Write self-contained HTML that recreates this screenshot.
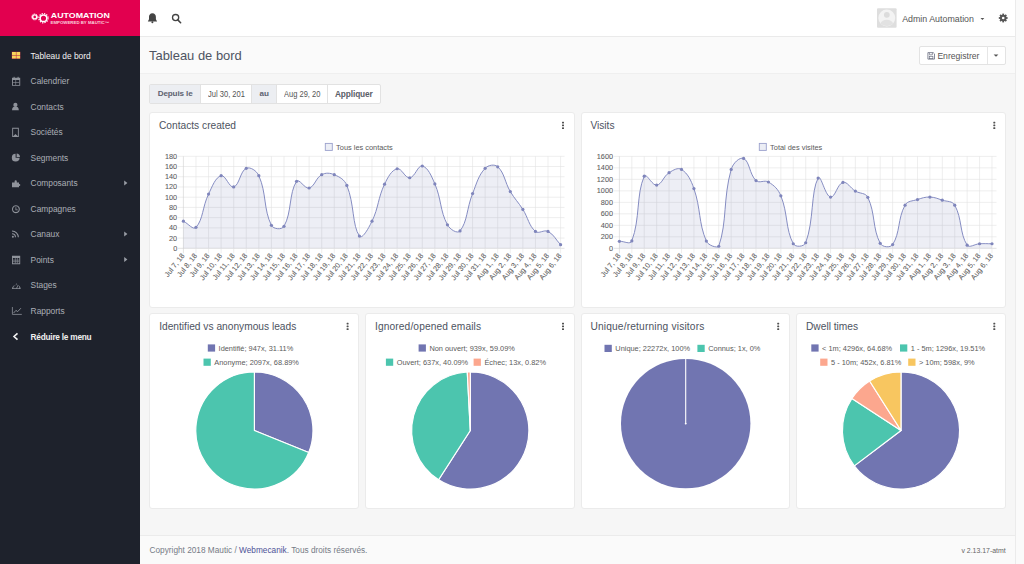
<!DOCTYPE html>
<html><head><meta charset="utf-8">
<style>
*{margin:0;padding:0;box-sizing:border-box}
html,body{width:1024px;height:564px;overflow:hidden;background:#f6f6f6;font-family:"Liberation Sans",sans-serif}
.abs{position:absolute}
#sidebar{left:0;top:0;width:140px;height:564px;background:#1e222c}
#logo{left:0;top:0;width:140px;height:36px;background:#e2004f}
#topbar{left:140px;top:0;width:875px;height:37px;background:#fff;border-bottom:1px solid #eaeaea;box-shadow:0 1px 0 #f2f2f2}
#rstrip{left:1015px;top:0;width:9px;height:564px;background:#fafafa;border-left:1px solid #ebebeb}
#pghead{left:140px;top:37px;width:875px;height:37px;background:#fafafa;border-bottom:1px solid #efefef}
#footer{left:140px;top:535px;width:875px;height:29px;background:#fafafa;border-top:1px solid #ebebeb}
.nav{position:absolute;left:30.6px;font-size:8.4px;color:#abafb6;white-space:nowrap;line-height:10px}
.nav.act{color:#f2f2f2}
.card{position:absolute;background:#fff;border:1px solid #ebebeb;border-radius:3px}
.ctitle{position:absolute;font-size:10.2px;color:#4d5361;white-space:nowrap;line-height:12px}
.dots{position:absolute;width:2px}
.dots i{display:block;width:1.9px;height:1.9px;background:#555;margin-bottom:0.8px;border-radius:0.3px}
.ov{position:absolute;left:0;top:0}
.txt{position:absolute;white-space:nowrap}
</style></head><body>
<div id="sidebar" class="abs"></div>
<div id="logo" class="abs">
  <svg width="140" height="36" viewBox="0 0 140 36" style="position:absolute;left:0;top:0">
    <g fill="none" stroke="#fff">
      <circle cx="34.7" cy="16.9" r="2" stroke-width="1.4"/>
      <circle cx="34.7" cy="16.9" r="3" stroke-width="1" stroke-dasharray="1 0.9"/>
      <circle cx="43.5" cy="18.2" r="3.3" stroke-width="1.5"/>
      <circle cx="43.5" cy="18.2" r="4.6" stroke-width="1.3" stroke-dasharray="1.3 1.1"/>
    </g>
    <text x="50.8" y="18.2" font-family="Liberation Sans" font-weight="700" font-size="7.3" fill="#fff" textLength="59" lengthAdjust="spacingAndGlyphs">AUTOMATION</text>
    <text x="50.6" y="23.9" font-family="Liberation Sans" font-weight="700" font-size="3.6" fill="#fbd0dc" textLength="58.5" lengthAdjust="spacingAndGlyphs">EMPOWERED BY MAUTIC™</text>
  </svg>
</div>
<div id="topbar" class="abs"></div>
<div id="pghead" class="abs"></div>
<div id="footer" class="abs"></div>
<div id="rstrip" class="abs"></div>

<!-- sidebar nav -->
<svg class="abs" style="left:0;top:40px" width="140" height="310" viewBox="0 40 140 310">
  <!-- dashboard icon -->
  <g>
    <rect x="11.7" y="51.7" width="8.6" height="7.2" fill="#b2224a"/>
    <rect x="12" y="52" width="3.9" height="3.1" fill="#f8d35a"/>
    <rect x="16.4" y="52" width="3.7" height="3.1" fill="#f8d35a"/>
    <rect x="12" y="55.6" width="3.9" height="2.9" fill="#f8d35a"/>
    <rect x="16.4" y="55.6" width="3.7" height="2.9" fill="#f8d35a"/>
  </g>
  <g fill="#8f939b" stroke="none">
    <!-- calendar -->
    <path d="M12 77.8h8.2v8h-8.2z M12.9 80v4.9h6.4V80z" fill-rule="evenodd"/>
    <rect x="13.6" y="76.8" width="1" height="2"/><rect x="17.6" y="76.8" width="1" height="2"/>
    <rect x="15.5" y="80" width="0.6" height="5"/><rect x="12.9" y="82.2" width="6.4" height="0.6"/>
    <!-- contacts -->
    <circle cx="15.4" cy="104.9" r="2.1"/><path d="M12 110.2c0-2.8 1.5-3.8 3.4-3.8s3.4 1 3.4 3.8z"/>
    <!-- societes -->
    <path d="M12.2 127.8h6.6v9.3h-6.6z M13.1 128.7v7.6l2.4-2.2 2.4 2.2v-7.6z" fill-rule="evenodd"/>
    <!-- segments -->
    <path d="M15.6 153.8a3.9 3.9 0 1 0 4 4h-4z"/><path d="M16.6 153.6v3.3h3.4a3.6 3.6 0 0 0-3.4-3.3z"/>
    <!-- composants puzzle -->
    <path d="M12 182.5h2.6v-1.2a1.1 1.1 0 1 1 2.2 0v1.2h2.2v1.6h0.3a1 1 0 1 1 0 2h-0.3v1.2h-7z"/>
    <!-- campagnes clock -->
    <path d="M15.9 205.2a4 4 0 1 0 0.01 0z M15.9 206.3a2.9 2.9 0 1 1-0.01 0z" fill-rule="evenodd"/><path d="M15.5 207.2h0.8v2.3h1.5v0.8h-2.3z"/>
    <!-- canaux rss -->
    <circle cx="12.9" cy="236.8" r="1"/><path d="M12 233.2a4 4 0 0 1 4 4h-1.1a2.9 2.9 0 0 0-2.9-2.9z"/><path d="M12 230.4a6.9 6.9 0 0 1 6.9 6.9h-1.1a5.8 5.8 0 0 0-5.8-5.8z"/>
    <!-- points calculator -->
    <path d="M12 255.8h8.2v8.4H12z M12.9 258v5.3h6.4V258z" fill-rule="evenodd"/>
    <rect x="14.9" y="258" width="0.6" height="5.3"/><rect x="16.9" y="258" width="0.6" height="5.3"/><rect x="12.9" y="259.8" width="6.4" height="0.6"/><rect x="12.9" y="261.5" width="6.4" height="0.6"/>
    <!-- stages tachometer -->
    <path d="M12 289a4.35 4.35 0 0 1 8.7 0z M13.2 288.2a3.1 3.1 0 0 1 6.2 0z" fill-rule="evenodd"/><path d="M16 288.6l1.6-3.2 0.6 0.3-1.4 3.1z"/><rect x="13.4" y="286.5" width="0.8" height="0.8"/><rect x="16" y="283.6" width="0.8" height="0.8"/>
  </g>
  <!-- rapports -->
  <path d="M12.4 307v7.4h9.4" fill="none" stroke="#8f939b" stroke-width="0.8"/><path d="M13.6 313l2.3-2.6 1.8 1.2 3.2-3.4" fill="none" stroke="#8f939b" stroke-width="0.9"/>
  <!-- chevrons right -->
  <g fill="#9a9ea6">
    <path d="M124.2 180.6l3.2 2.4-3.2 2.4z"/>
    <path d="M124.2 231.6l3.2 2.4-3.2 2.4z"/>
    <path d="M124.2 257.1l3.2 2.4-3.2 2.4z"/>
  </g>
  <path d="M17.5 333.3l-3.5 3.2 3.5 3.2" fill="none" stroke="#f0f0f0" stroke-width="1.6"/>
</svg>
<div class="nav act" style="top:50.5px">Tableau de bord</div>
<div class="nav" style="top:76px">Calendrier</div>
<div class="nav" style="top:101.5px">Contacts</div>
<div class="nav" style="top:127px">Sociétés</div>
<div class="nav" style="top:152.5px">Segments</div>
<div class="nav" style="top:178px">Composants</div>
<div class="nav" style="top:203.5px">Campagnes</div>
<div class="nav" style="top:229px">Canaux</div>
<div class="nav" style="top:254.5px">Points</div>
<div class="nav" style="top:280px">Stages</div>
<div class="nav" style="top:305.5px">Rapports</div>
<div class="nav act" style="top:331.6px;font-weight:700;color:#eeeeee;font-size:8.3px;letter-spacing:-0.25px">Réduire le menu</div>

<!-- topbar icons -->
<svg class="abs" style="left:140px;top:0" width="875" height="36" viewBox="140 0 875 36">
  <path d="M152.4 13.2c-2.3 0-3.4 1.8-3.4 3.8v2.3l-1.2 2.2h9.3l-1.2-2.2V17c0-2-1.1-3.8-3.5-3.8z" fill="#444"/>
  <circle cx="152.4" cy="22.2" r="1" fill="#444"/>
  <circle cx="175.6" cy="17.6" r="3.1" fill="none" stroke="#444" stroke-width="1.3"/>
  <path d="M177.8 19.9l2.8 2.8" stroke="#444" stroke-width="1.6" stroke-linecap="round"/>
  <!-- avatar -->
  <rect x="877" y="8.2" width="19.6" height="19.5" fill="#dedede" rx="1"/>
  <circle cx="886.8" cy="18" r="8.4" fill="#f3f3f3"/>
  <circle cx="886.8" cy="14.8" r="2.9" fill="#dcdcdc"/>
  <path d="M880.5 23.5c1-2.6 3.3-3.8 6.3-3.8s5.3 1.2 6.3 3.8c-1.6 1.5-3.8 2.4-6.3 2.4s-4.7-0.9-6.3-2.4z" fill="#e2e2e2"/>
  <path d="M980.5 18l1.9 1.9 1.9-1.9z" fill="#555"/>
  <!-- gear -->
  <g transform="translate(1003.2,18)" fill="#555">
    <circle r="3.3"/>
    <g id="teeth"><rect x="-0.9" y="-4.4" width="1.8" height="8.8"/><rect x="-0.9" y="-4.4" width="1.8" height="8.8" transform="rotate(45)"/><rect x="-0.9" y="-4.4" width="1.8" height="8.8" transform="rotate(90)"/><rect x="-0.9" y="-4.4" width="1.8" height="8.8" transform="rotate(135)"/></g>
    <circle r="1.3" fill="#fff"/>
  </g>
</svg>
<div class="txt" style="left:902.2px;top:14.2px;font-size:8.85px;color:#555;line-height:10px">Admin Automation</div>

<!-- page header -->
<div class="txt" style="left:149px;top:47.6px;font-size:12.95px;color:#4e5462;line-height:15px">Tableau de bord</div>
<div class="abs" style="left:918.8px;top:45.6px;width:87.4px;height:19.2px;background:#fff;border:1px solid #e3e3e3;border-radius:2px"></div>
<div class="abs" style="left:987px;top:46.4px;width:1px;height:18px;background:#e6e6e6"></div>
<svg class="abs" style="left:925px;top:50px" width="12" height="10" viewBox="925 50 12 10">
  <path d="M927.9 52.6h5.3l1.3 1.3v5.2h-6.6z" fill="none" stroke="#6a6f80" stroke-width="0.8"/>
  <path d="M929.4 52.8v2h3v-2" fill="none" stroke="#6a6f80" stroke-width="0.7"/>
  <rect x="929.3" y="56.3" width="3.6" height="2.4" fill="none" stroke="#6a6f80" stroke-width="0.7"/>
</svg>
<div class="txt" style="left:937.4px;top:51.1px;font-size:8.6px;color:#555;line-height:10px">Enregistrer</div>
<svg class="abs" style="left:990px;top:52px" width="12" height="8" viewBox="990 52 12 8"><path d="M993.6 54.4l2.4 2.4 2.4-2.4z" fill="#555"/></svg>

<!-- date filter -->
<div class="abs" style="left:149px;top:84px;width:232px;height:20px;background:#fff;border:1px solid #e2e2e2;border-radius:2px"></div>
<div class="abs" style="left:150px;top:85px;width:50px;height:18px;background:#eceef2"></div>
<div class="abs" style="left:200px;top:85px;width:1px;height:18px;background:#e2e2e2"></div>
<div class="abs" style="left:251px;top:85px;width:26px;height:18px;background:#eceef2;border-left:1px solid #e2e2e2;border-right:1px solid #e2e2e2"></div>
<div class="abs" style="left:327px;top:85px;width:1px;height:18px;background:#e2e2e2"></div>
<div class="txt" style="left:157.7px;top:89.3px;font-size:8.1px;font-weight:700;color:#5d6270;line-height:10px;letter-spacing:-0.12px">Depuis le</div>
<div class="txt" style="left:207.7px;top:88.6px;font-size:9px;color:#555;line-height:11px;transform:scaleX(0.84);transform-origin:0 0">Jul 30, 201</div>
<div class="txt" style="left:259.5px;top:89.3px;font-size:8.1px;font-weight:700;color:#5d6270;line-height:10px">au</div>
<div class="txt" style="left:284.1px;top:88.6px;font-size:9px;color:#555;line-height:11px;transform:scaleX(0.835);transform-origin:0 0">Aug 29, 20</div>
<div class="txt" style="left:334.9px;top:89px;font-size:8.3px;font-weight:700;color:#5a5e68;line-height:10px;letter-spacing:-0.1px">Appliquer</div>

<!-- cards -->
<div class="card" style="left:149px;top:112px;width:426px;height:196px"></div>
<div class="card" style="left:581px;top:112px;width:425px;height:196px"></div>
<div class="card" style="left:149px;top:313px;width:210px;height:196px"></div>
<div class="card" style="left:365px;top:313px;width:210px;height:196px"></div>
<div class="card" style="left:581px;top:313px;width:209px;height:196px"></div>
<div class="card" style="left:796px;top:313px;width:210px;height:196px"></div>

<div class="ctitle" style="left:159px;top:119.8px">Contacts created</div>
<div class="ctitle" style="left:590.4px;top:119.8px">Visits</div>
<div class="ctitle" style="left:159.2px;top:321px">Identified vs anonymous leads</div>
<div class="ctitle" style="left:375px;top:321px;letter-spacing:0.12px">Ignored/opened emails</div>
<div class="ctitle" style="left:590.4px;top:321px;letter-spacing:0.17px">Unique/returning visitors</div>
<div class="ctitle" style="left:806px;top:321px">Dwell times</div>

<svg class="ov" width="1024" height="564" viewBox="0 0 1024 564"><rect x="562.00" y="121.75" width="2" height="1.7" rx="0.4" fill="#505050"/><rect x="562.00" y="124.55" width="2" height="1.7" rx="0.4" fill="#505050"/><rect x="562.00" y="127.35" width="2" height="1.7" rx="0.4" fill="#505050"/><rect x="993.30" y="121.75" width="2" height="1.7" rx="0.4" fill="#505050"/><rect x="993.30" y="124.55" width="2" height="1.7" rx="0.4" fill="#505050"/><rect x="993.30" y="127.35" width="2" height="1.7" rx="0.4" fill="#505050"/><rect x="346.60" y="322.75" width="2" height="1.7" rx="0.4" fill="#505050"/><rect x="346.60" y="325.55" width="2" height="1.7" rx="0.4" fill="#505050"/><rect x="346.60" y="328.35" width="2" height="1.7" rx="0.4" fill="#505050"/><rect x="562.00" y="322.75" width="2" height="1.7" rx="0.4" fill="#505050"/><rect x="562.00" y="325.55" width="2" height="1.7" rx="0.4" fill="#505050"/><rect x="562.00" y="328.35" width="2" height="1.7" rx="0.4" fill="#505050"/><rect x="777.20" y="322.75" width="2" height="1.7" rx="0.4" fill="#505050"/><rect x="777.20" y="325.55" width="2" height="1.7" rx="0.4" fill="#505050"/><rect x="777.20" y="328.35" width="2" height="1.7" rx="0.4" fill="#505050"/><rect x="993.30" y="322.75" width="2" height="1.7" rx="0.4" fill="#505050"/><rect x="993.30" y="325.55" width="2" height="1.7" rx="0.4" fill="#505050"/><rect x="993.30" y="328.35" width="2" height="1.7" rx="0.4" fill="#505050"/></svg>

<svg class="ov" width="1024" height="564" viewBox="0 0 1024 564">
<style>.tk{font-family:'Liberation Sans', sans-serif;font-size:7.3px;fill:#5a5a5a;stroke:#777;stroke-width:0.08px} .lg{font-family:'Liberation Sans', sans-serif;font-size:7.4px;fill:#5a5a5a}</style>
<line x1="178" y1="248.30" x2="564.5" y2="248.30" stroke="#cfcfcf" stroke-width="0.6"/>
<text x="177.2" y="250.80" text-anchor="end" class="tk">0</text>
<line x1="178" y1="238.08" x2="564.5" y2="238.08" stroke="#e2e2e2" stroke-width="0.6"/>
<text x="177.2" y="240.58" text-anchor="end" class="tk">20</text>
<line x1="178" y1="227.86" x2="564.5" y2="227.86" stroke="#e2e2e2" stroke-width="0.6"/>
<text x="177.2" y="230.36" text-anchor="end" class="tk">40</text>
<line x1="178" y1="217.63" x2="564.5" y2="217.63" stroke="#e2e2e2" stroke-width="0.6"/>
<text x="177.2" y="220.13" text-anchor="end" class="tk">60</text>
<line x1="178" y1="207.41" x2="564.5" y2="207.41" stroke="#e2e2e2" stroke-width="0.6"/>
<text x="177.2" y="209.91" text-anchor="end" class="tk">80</text>
<line x1="178" y1="197.19" x2="564.5" y2="197.19" stroke="#e2e2e2" stroke-width="0.6"/>
<text x="177.2" y="199.69" text-anchor="end" class="tk">100</text>
<line x1="178" y1="186.97" x2="564.5" y2="186.97" stroke="#e2e2e2" stroke-width="0.6"/>
<text x="177.2" y="189.47" text-anchor="end" class="tk">120</text>
<line x1="178" y1="176.74" x2="564.5" y2="176.74" stroke="#e2e2e2" stroke-width="0.6"/>
<text x="177.2" y="179.24" text-anchor="end" class="tk">140</text>
<line x1="178" y1="166.52" x2="564.5" y2="166.52" stroke="#e2e2e2" stroke-width="0.6"/>
<text x="177.2" y="169.02" text-anchor="end" class="tk">160</text>
<line x1="178" y1="156.30" x2="564.5" y2="156.30" stroke="#e2e2e2" stroke-width="0.6"/>
<text x="177.2" y="158.80" text-anchor="end" class="tk">180</text>
<line x1="183.40" y1="156.3" x2="183.40" y2="253.3" stroke="#cfcfcf" stroke-width="0.6"/>
<text transform="translate(184.90,255.80) rotate(-52)" text-anchor="end" class="tk">Jul 7, 18</text>
<line x1="195.97" y1="156.3" x2="195.97" y2="253.3" stroke="#e2e2e2" stroke-width="0.6"/>
<text transform="translate(197.47,255.80) rotate(-52)" text-anchor="end" class="tk">Jul 8, 18</text>
<line x1="208.55" y1="156.3" x2="208.55" y2="253.3" stroke="#e2e2e2" stroke-width="0.6"/>
<text transform="translate(210.05,255.80) rotate(-52)" text-anchor="end" class="tk">Jul 9, 18</text>
<line x1="221.12" y1="156.3" x2="221.12" y2="253.3" stroke="#e2e2e2" stroke-width="0.6"/>
<text transform="translate(222.62,255.80) rotate(-52)" text-anchor="end" class="tk">Jul 10, 18</text>
<line x1="233.69" y1="156.3" x2="233.69" y2="253.3" stroke="#e2e2e2" stroke-width="0.6"/>
<text transform="translate(235.19,255.80) rotate(-52)" text-anchor="end" class="tk">Jul 11, 18</text>
<line x1="246.27" y1="156.3" x2="246.27" y2="253.3" stroke="#e2e2e2" stroke-width="0.6"/>
<text transform="translate(247.77,255.80) rotate(-52)" text-anchor="end" class="tk">Jul 12, 18</text>
<line x1="258.84" y1="156.3" x2="258.84" y2="253.3" stroke="#e2e2e2" stroke-width="0.6"/>
<text transform="translate(260.34,255.80) rotate(-52)" text-anchor="end" class="tk">Jul 13, 18</text>
<line x1="271.41" y1="156.3" x2="271.41" y2="253.3" stroke="#e2e2e2" stroke-width="0.6"/>
<text transform="translate(272.91,255.80) rotate(-52)" text-anchor="end" class="tk">Jul 14, 18</text>
<line x1="283.99" y1="156.3" x2="283.99" y2="253.3" stroke="#e2e2e2" stroke-width="0.6"/>
<text transform="translate(285.49,255.80) rotate(-52)" text-anchor="end" class="tk">Jul 15, 18</text>
<line x1="296.56" y1="156.3" x2="296.56" y2="253.3" stroke="#e2e2e2" stroke-width="0.6"/>
<text transform="translate(298.06,255.80) rotate(-52)" text-anchor="end" class="tk">Jul 16, 18</text>
<line x1="309.13" y1="156.3" x2="309.13" y2="253.3" stroke="#e2e2e2" stroke-width="0.6"/>
<text transform="translate(310.63,255.80) rotate(-52)" text-anchor="end" class="tk">Jul 17, 18</text>
<line x1="321.71" y1="156.3" x2="321.71" y2="253.3" stroke="#e2e2e2" stroke-width="0.6"/>
<text transform="translate(323.21,255.80) rotate(-52)" text-anchor="end" class="tk">Jul 18, 18</text>
<line x1="334.28" y1="156.3" x2="334.28" y2="253.3" stroke="#e2e2e2" stroke-width="0.6"/>
<text transform="translate(335.78,255.80) rotate(-52)" text-anchor="end" class="tk">Jul 19, 18</text>
<line x1="346.85" y1="156.3" x2="346.85" y2="253.3" stroke="#e2e2e2" stroke-width="0.6"/>
<text transform="translate(348.35,255.80) rotate(-52)" text-anchor="end" class="tk">Jul 20, 18</text>
<line x1="359.43" y1="156.3" x2="359.43" y2="253.3" stroke="#e2e2e2" stroke-width="0.6"/>
<text transform="translate(360.93,255.80) rotate(-52)" text-anchor="end" class="tk">Jul 21, 18</text>
<line x1="372.00" y1="156.3" x2="372.00" y2="253.3" stroke="#e2e2e2" stroke-width="0.6"/>
<text transform="translate(373.50,255.80) rotate(-52)" text-anchor="end" class="tk">Jul 22, 18</text>
<line x1="384.57" y1="156.3" x2="384.57" y2="253.3" stroke="#e2e2e2" stroke-width="0.6"/>
<text transform="translate(386.07,255.80) rotate(-52)" text-anchor="end" class="tk">Jul 23, 18</text>
<line x1="397.15" y1="156.3" x2="397.15" y2="253.3" stroke="#e2e2e2" stroke-width="0.6"/>
<text transform="translate(398.65,255.80) rotate(-52)" text-anchor="end" class="tk">Jul 24, 18</text>
<line x1="409.72" y1="156.3" x2="409.72" y2="253.3" stroke="#e2e2e2" stroke-width="0.6"/>
<text transform="translate(411.22,255.80) rotate(-52)" text-anchor="end" class="tk">Jul 25, 18</text>
<line x1="422.29" y1="156.3" x2="422.29" y2="253.3" stroke="#e2e2e2" stroke-width="0.6"/>
<text transform="translate(423.79,255.80) rotate(-52)" text-anchor="end" class="tk">Jul 26, 18</text>
<line x1="434.87" y1="156.3" x2="434.87" y2="253.3" stroke="#e2e2e2" stroke-width="0.6"/>
<text transform="translate(436.37,255.80) rotate(-52)" text-anchor="end" class="tk">Jul 27, 18</text>
<line x1="447.44" y1="156.3" x2="447.44" y2="253.3" stroke="#e2e2e2" stroke-width="0.6"/>
<text transform="translate(448.94,255.80) rotate(-52)" text-anchor="end" class="tk">Jul 28, 18</text>
<line x1="460.01" y1="156.3" x2="460.01" y2="253.3" stroke="#e2e2e2" stroke-width="0.6"/>
<text transform="translate(461.51,255.80) rotate(-52)" text-anchor="end" class="tk">Jul 29, 18</text>
<line x1="472.59" y1="156.3" x2="472.59" y2="253.3" stroke="#e2e2e2" stroke-width="0.6"/>
<text transform="translate(474.09,255.80) rotate(-52)" text-anchor="end" class="tk">Jul 30, 18</text>
<line x1="485.16" y1="156.3" x2="485.16" y2="253.3" stroke="#e2e2e2" stroke-width="0.6"/>
<text transform="translate(486.66,255.80) rotate(-52)" text-anchor="end" class="tk">Jul 31, 18</text>
<line x1="497.73" y1="156.3" x2="497.73" y2="253.3" stroke="#e2e2e2" stroke-width="0.6"/>
<text transform="translate(499.23,255.80) rotate(-52)" text-anchor="end" class="tk">Aug 1, 18</text>
<line x1="510.31" y1="156.3" x2="510.31" y2="253.3" stroke="#e2e2e2" stroke-width="0.6"/>
<text transform="translate(511.81,255.80) rotate(-52)" text-anchor="end" class="tk">Aug 2, 18</text>
<line x1="522.88" y1="156.3" x2="522.88" y2="253.3" stroke="#e2e2e2" stroke-width="0.6"/>
<text transform="translate(524.38,255.80) rotate(-52)" text-anchor="end" class="tk">Aug 3, 18</text>
<line x1="535.45" y1="156.3" x2="535.45" y2="253.3" stroke="#e2e2e2" stroke-width="0.6"/>
<text transform="translate(536.95,255.80) rotate(-52)" text-anchor="end" class="tk">Aug 4, 18</text>
<line x1="548.03" y1="156.3" x2="548.03" y2="253.3" stroke="#e2e2e2" stroke-width="0.6"/>
<text transform="translate(549.53,255.80) rotate(-52)" text-anchor="end" class="tk">Aug 5, 18</text>
<line x1="560.60" y1="156.3" x2="560.60" y2="253.3" stroke="#e2e2e2" stroke-width="0.6"/>
<text transform="translate(562.10,255.80) rotate(-52)" text-anchor="end" class="tk">Aug 6, 18</text>
<path d="M183.40,221.21 C188.43,223.66 193.13,230.41 195.97,227.34 C203.19,219.57 202.37,206.81 208.55,194.12 C212.42,186.16 215.39,177.35 221.12,175.72 C225.45,174.49 229.38,188.24 233.69,186.97 C239.44,185.27 240.17,171.04 246.27,168.31 C250.22,166.54 256.61,170.66 258.84,175.72 C266.67,193.46 263.34,209.06 271.41,225.30 C273.40,229.30 281.85,230.06 283.99,226.32 C291.91,212.48 288.85,193.10 296.56,181.34 C298.91,177.77 304.73,189.15 309.13,187.99 C314.79,186.49 315.75,177.85 321.71,174.70 C325.80,172.53 329.93,172.85 334.28,174.70 C339.99,177.14 344.43,179.53 346.85,185.43 C354.49,204.06 352.10,225.61 359.43,236.03 C362.16,239.92 368.66,228.10 372.00,221.21 C378.72,207.35 377.90,198.07 384.57,184.16 C387.96,177.09 391.49,170.21 397.15,168.77 C401.55,167.65 404.96,178.29 409.72,177.77 C415.02,177.19 417.86,164.93 422.29,166.01 C427.92,167.38 431.46,175.95 434.87,183.90 C441.52,199.46 439.86,210.62 447.44,224.79 C449.92,229.42 457.38,234.19 460.01,230.92 C467.44,221.72 466.73,208.19 472.59,193.61 C476.79,183.15 478.22,175.72 485.16,168.31 C488.27,164.99 494.58,163.87 497.73,166.78 C504.64,173.17 504.68,182.01 510.31,191.57 C514.74,199.08 518.22,202.07 522.88,209.46 C528.28,218.01 528.73,225.56 535.45,231.43 C538.79,234.35 543.93,229.27 548.03,231.43 C553.99,234.58 555.57,239.41 560.60,244.72 L560.60,248.3 L183.40,248.3 Z" fill="rgba(78,93,157,0.1)" stroke="none"/>
<path d="M183.40,221.21 C188.43,223.66 193.13,230.41 195.97,227.34 C203.19,219.57 202.37,206.81 208.55,194.12 C212.42,186.16 215.39,177.35 221.12,175.72 C225.45,174.49 229.38,188.24 233.69,186.97 C239.44,185.27 240.17,171.04 246.27,168.31 C250.22,166.54 256.61,170.66 258.84,175.72 C266.67,193.46 263.34,209.06 271.41,225.30 C273.40,229.30 281.85,230.06 283.99,226.32 C291.91,212.48 288.85,193.10 296.56,181.34 C298.91,177.77 304.73,189.15 309.13,187.99 C314.79,186.49 315.75,177.85 321.71,174.70 C325.80,172.53 329.93,172.85 334.28,174.70 C339.99,177.14 344.43,179.53 346.85,185.43 C354.49,204.06 352.10,225.61 359.43,236.03 C362.16,239.92 368.66,228.10 372.00,221.21 C378.72,207.35 377.90,198.07 384.57,184.16 C387.96,177.09 391.49,170.21 397.15,168.77 C401.55,167.65 404.96,178.29 409.72,177.77 C415.02,177.19 417.86,164.93 422.29,166.01 C427.92,167.38 431.46,175.95 434.87,183.90 C441.52,199.46 439.86,210.62 447.44,224.79 C449.92,229.42 457.38,234.19 460.01,230.92 C467.44,221.72 466.73,208.19 472.59,193.61 C476.79,183.15 478.22,175.72 485.16,168.31 C488.27,164.99 494.58,163.87 497.73,166.78 C504.64,173.17 504.68,182.01 510.31,191.57 C514.74,199.08 518.22,202.07 522.88,209.46 C528.28,218.01 528.73,225.56 535.45,231.43 C538.79,234.35 543.93,229.27 548.03,231.43 C553.99,234.58 555.57,239.41 560.60,244.72" fill="none" stroke="#7f87bf" stroke-width="0.95"/>
<circle cx="183.40" cy="221.21" r="1.6" fill="#7f85bb"/>
<circle cx="195.97" cy="227.34" r="1.6" fill="#7f85bb"/>
<circle cx="208.55" cy="194.12" r="1.6" fill="#7f85bb"/>
<circle cx="221.12" cy="175.72" r="1.6" fill="#7f85bb"/>
<circle cx="233.69" cy="186.97" r="1.6" fill="#7f85bb"/>
<circle cx="246.27" cy="168.31" r="1.6" fill="#7f85bb"/>
<circle cx="258.84" cy="175.72" r="1.6" fill="#7f85bb"/>
<circle cx="271.41" cy="225.30" r="1.6" fill="#7f85bb"/>
<circle cx="283.99" cy="226.32" r="1.6" fill="#7f85bb"/>
<circle cx="296.56" cy="181.34" r="1.6" fill="#7f85bb"/>
<circle cx="309.13" cy="187.99" r="1.6" fill="#7f85bb"/>
<circle cx="321.71" cy="174.70" r="1.6" fill="#7f85bb"/>
<circle cx="334.28" cy="174.70" r="1.6" fill="#7f85bb"/>
<circle cx="346.85" cy="185.43" r="1.6" fill="#7f85bb"/>
<circle cx="359.43" cy="236.03" r="1.6" fill="#7f85bb"/>
<circle cx="372.00" cy="221.21" r="1.6" fill="#7f85bb"/>
<circle cx="384.57" cy="184.16" r="1.6" fill="#7f85bb"/>
<circle cx="397.15" cy="168.77" r="1.6" fill="#7f85bb"/>
<circle cx="409.72" cy="177.77" r="1.6" fill="#7f85bb"/>
<circle cx="422.29" cy="166.01" r="1.6" fill="#7f85bb"/>
<circle cx="434.87" cy="183.90" r="1.6" fill="#7f85bb"/>
<circle cx="447.44" cy="224.79" r="1.6" fill="#7f85bb"/>
<circle cx="460.01" cy="230.92" r="1.6" fill="#7f85bb"/>
<circle cx="472.59" cy="193.61" r="1.6" fill="#7f85bb"/>
<circle cx="485.16" cy="168.31" r="1.6" fill="#7f85bb"/>
<circle cx="497.73" cy="166.78" r="1.6" fill="#7f85bb"/>
<circle cx="510.31" cy="191.57" r="1.6" fill="#7f85bb"/>
<circle cx="522.88" cy="209.46" r="1.6" fill="#7f85bb"/>
<circle cx="535.45" cy="231.43" r="1.6" fill="#7f85bb"/>
<circle cx="548.03" cy="231.43" r="1.6" fill="#7f85bb"/>
<circle cx="560.60" cy="244.72" r="1.6" fill="#7f85bb"/>
<rect x="325.3" y="143.4" width="7" height="7" fill="#eceef5" stroke="#9aa0cc" stroke-width="0.9"/>
<text x="336.1" y="149.5" class="lg">Tous les contacts</text>
<line x1="614" y1="248.30" x2="996.5" y2="248.30" stroke="#cfcfcf" stroke-width="0.6"/>
<text x="613" y="250.80" text-anchor="end" class="tk">0</text>
<line x1="614" y1="236.81" x2="996.5" y2="236.81" stroke="#e2e2e2" stroke-width="0.6"/>
<text x="613" y="239.31" text-anchor="end" class="tk">200</text>
<line x1="614" y1="225.33" x2="996.5" y2="225.33" stroke="#e2e2e2" stroke-width="0.6"/>
<text x="613" y="227.83" text-anchor="end" class="tk">400</text>
<line x1="614" y1="213.84" x2="996.5" y2="213.84" stroke="#e2e2e2" stroke-width="0.6"/>
<text x="613" y="216.34" text-anchor="end" class="tk">600</text>
<line x1="614" y1="202.35" x2="996.5" y2="202.35" stroke="#e2e2e2" stroke-width="0.6"/>
<text x="613" y="204.85" text-anchor="end" class="tk">800</text>
<line x1="614" y1="190.86" x2="996.5" y2="190.86" stroke="#e2e2e2" stroke-width="0.6"/>
<text x="613" y="193.36" text-anchor="end" class="tk">1000</text>
<line x1="614" y1="179.38" x2="996.5" y2="179.38" stroke="#e2e2e2" stroke-width="0.6"/>
<text x="613" y="181.88" text-anchor="end" class="tk">1200</text>
<line x1="614" y1="167.89" x2="996.5" y2="167.89" stroke="#e2e2e2" stroke-width="0.6"/>
<text x="613" y="170.39" text-anchor="end" class="tk">1400</text>
<line x1="614" y1="156.40" x2="996.5" y2="156.40" stroke="#e2e2e2" stroke-width="0.6"/>
<text x="613" y="158.90" text-anchor="end" class="tk">1600</text>
<line x1="619.40" y1="156.4" x2="619.40" y2="253.3" stroke="#cfcfcf" stroke-width="0.6"/>
<text transform="translate(620.90,255.80) rotate(-52)" text-anchor="end" class="tk">Jul 7, 18</text>
<line x1="631.82" y1="156.4" x2="631.82" y2="253.3" stroke="#e2e2e2" stroke-width="0.6"/>
<text transform="translate(633.32,255.80) rotate(-52)" text-anchor="end" class="tk">Jul 8, 18</text>
<line x1="644.24" y1="156.4" x2="644.24" y2="253.3" stroke="#e2e2e2" stroke-width="0.6"/>
<text transform="translate(645.74,255.80) rotate(-52)" text-anchor="end" class="tk">Jul 9, 18</text>
<line x1="656.66" y1="156.4" x2="656.66" y2="253.3" stroke="#e2e2e2" stroke-width="0.6"/>
<text transform="translate(658.16,255.80) rotate(-52)" text-anchor="end" class="tk">Jul 10, 18</text>
<line x1="669.08" y1="156.4" x2="669.08" y2="253.3" stroke="#e2e2e2" stroke-width="0.6"/>
<text transform="translate(670.58,255.80) rotate(-52)" text-anchor="end" class="tk">Jul 11, 18</text>
<line x1="681.50" y1="156.4" x2="681.50" y2="253.3" stroke="#e2e2e2" stroke-width="0.6"/>
<text transform="translate(683.00,255.80) rotate(-52)" text-anchor="end" class="tk">Jul 12, 18</text>
<line x1="693.92" y1="156.4" x2="693.92" y2="253.3" stroke="#e2e2e2" stroke-width="0.6"/>
<text transform="translate(695.42,255.80) rotate(-52)" text-anchor="end" class="tk">Jul 13, 18</text>
<line x1="706.34" y1="156.4" x2="706.34" y2="253.3" stroke="#e2e2e2" stroke-width="0.6"/>
<text transform="translate(707.84,255.80) rotate(-52)" text-anchor="end" class="tk">Jul 14, 18</text>
<line x1="718.76" y1="156.4" x2="718.76" y2="253.3" stroke="#e2e2e2" stroke-width="0.6"/>
<text transform="translate(720.26,255.80) rotate(-52)" text-anchor="end" class="tk">Jul 15, 18</text>
<line x1="731.18" y1="156.4" x2="731.18" y2="253.3" stroke="#e2e2e2" stroke-width="0.6"/>
<text transform="translate(732.68,255.80) rotate(-52)" text-anchor="end" class="tk">Jul 16, 18</text>
<line x1="743.60" y1="156.4" x2="743.60" y2="253.3" stroke="#e2e2e2" stroke-width="0.6"/>
<text transform="translate(745.10,255.80) rotate(-52)" text-anchor="end" class="tk">Jul 17, 18</text>
<line x1="756.02" y1="156.4" x2="756.02" y2="253.3" stroke="#e2e2e2" stroke-width="0.6"/>
<text transform="translate(757.52,255.80) rotate(-52)" text-anchor="end" class="tk">Jul 18, 18</text>
<line x1="768.44" y1="156.4" x2="768.44" y2="253.3" stroke="#e2e2e2" stroke-width="0.6"/>
<text transform="translate(769.94,255.80) rotate(-52)" text-anchor="end" class="tk">Jul 19, 18</text>
<line x1="780.86" y1="156.4" x2="780.86" y2="253.3" stroke="#e2e2e2" stroke-width="0.6"/>
<text transform="translate(782.36,255.80) rotate(-52)" text-anchor="end" class="tk">Jul 20, 18</text>
<line x1="793.28" y1="156.4" x2="793.28" y2="253.3" stroke="#e2e2e2" stroke-width="0.6"/>
<text transform="translate(794.78,255.80) rotate(-52)" text-anchor="end" class="tk">Jul 21, 18</text>
<line x1="805.70" y1="156.4" x2="805.70" y2="253.3" stroke="#e2e2e2" stroke-width="0.6"/>
<text transform="translate(807.20,255.80) rotate(-52)" text-anchor="end" class="tk">Jul 22, 18</text>
<line x1="818.12" y1="156.4" x2="818.12" y2="253.3" stroke="#e2e2e2" stroke-width="0.6"/>
<text transform="translate(819.62,255.80) rotate(-52)" text-anchor="end" class="tk">Jul 23, 18</text>
<line x1="830.54" y1="156.4" x2="830.54" y2="253.3" stroke="#e2e2e2" stroke-width="0.6"/>
<text transform="translate(832.04,255.80) rotate(-52)" text-anchor="end" class="tk">Jul 24, 18</text>
<line x1="842.96" y1="156.4" x2="842.96" y2="253.3" stroke="#e2e2e2" stroke-width="0.6"/>
<text transform="translate(844.46,255.80) rotate(-52)" text-anchor="end" class="tk">Jul 25, 18</text>
<line x1="855.38" y1="156.4" x2="855.38" y2="253.3" stroke="#e2e2e2" stroke-width="0.6"/>
<text transform="translate(856.88,255.80) rotate(-52)" text-anchor="end" class="tk">Jul 26, 18</text>
<line x1="867.80" y1="156.4" x2="867.80" y2="253.3" stroke="#e2e2e2" stroke-width="0.6"/>
<text transform="translate(869.30,255.80) rotate(-52)" text-anchor="end" class="tk">Jul 27, 18</text>
<line x1="880.22" y1="156.4" x2="880.22" y2="253.3" stroke="#e2e2e2" stroke-width="0.6"/>
<text transform="translate(881.72,255.80) rotate(-52)" text-anchor="end" class="tk">Jul 28, 18</text>
<line x1="892.64" y1="156.4" x2="892.64" y2="253.3" stroke="#e2e2e2" stroke-width="0.6"/>
<text transform="translate(894.14,255.80) rotate(-52)" text-anchor="end" class="tk">Jul 29, 18</text>
<line x1="905.06" y1="156.4" x2="905.06" y2="253.3" stroke="#e2e2e2" stroke-width="0.6"/>
<text transform="translate(906.56,255.80) rotate(-52)" text-anchor="end" class="tk">Jul 30, 18</text>
<line x1="917.48" y1="156.4" x2="917.48" y2="253.3" stroke="#e2e2e2" stroke-width="0.6"/>
<text transform="translate(918.98,255.80) rotate(-52)" text-anchor="end" class="tk">Jul 31, 18</text>
<line x1="929.90" y1="156.4" x2="929.90" y2="253.3" stroke="#e2e2e2" stroke-width="0.6"/>
<text transform="translate(931.40,255.80) rotate(-52)" text-anchor="end" class="tk">Aug 1, 18</text>
<line x1="942.32" y1="156.4" x2="942.32" y2="253.3" stroke="#e2e2e2" stroke-width="0.6"/>
<text transform="translate(943.82,255.80) rotate(-52)" text-anchor="end" class="tk">Aug 2, 18</text>
<line x1="954.74" y1="156.4" x2="954.74" y2="253.3" stroke="#e2e2e2" stroke-width="0.6"/>
<text transform="translate(956.24,255.80) rotate(-52)" text-anchor="end" class="tk">Aug 3, 18</text>
<line x1="967.16" y1="156.4" x2="967.16" y2="253.3" stroke="#e2e2e2" stroke-width="0.6"/>
<text transform="translate(968.66,255.80) rotate(-52)" text-anchor="end" class="tk">Aug 4, 18</text>
<line x1="979.58" y1="156.4" x2="979.58" y2="253.3" stroke="#e2e2e2" stroke-width="0.6"/>
<text transform="translate(981.08,255.80) rotate(-52)" text-anchor="end" class="tk">Aug 5, 18</text>
<line x1="992.00" y1="156.4" x2="992.00" y2="253.3" stroke="#e2e2e2" stroke-width="0.6"/>
<text transform="translate(993.50,255.80) rotate(-52)" text-anchor="end" class="tk">Aug 6, 18</text>
<path d="M619.40,241.29 C624.37,241.13 630.24,245.02 631.82,240.89 C640.18,218.99 636.18,194.32 644.24,176.22 C646.11,172.01 652.04,185.77 656.66,185.12 C661.97,184.37 663.34,176.33 669.08,172.71 C673.28,170.06 677.92,167.15 681.50,169.44 C687.86,173.51 690.96,180.09 693.92,188.62 C700.90,208.74 698.39,222.62 706.34,241.06 C708.32,245.67 717.30,248.30 718.76,246.23 C727.23,221.81 722.99,198.38 731.18,169.44 C732.92,163.27 739.67,156.71 743.60,158.47 C749.61,161.16 749.36,174.27 756.02,180.58 C759.30,183.69 764.45,179.56 768.44,182.02 C774.38,185.67 778.15,189.11 780.86,195.86 C788.08,213.81 785.34,228.79 793.28,243.76 C795.28,247.53 804.12,246.91 805.70,242.73 C814.05,220.65 810.73,191.70 818.12,178.11 C820.67,173.43 825.16,196.13 830.54,197.07 C835.10,197.86 837.41,183.75 842.96,182.42 C847.34,181.37 850.20,187.99 855.38,191.09 C860.13,193.94 865.56,192.58 867.80,197.30 C875.50,213.49 872.34,228.37 880.22,243.36 C882.28,247.28 890.34,248.11 892.64,244.57 C900.27,232.83 897.59,218.71 905.06,205.16 C907.53,200.69 912.33,201.22 917.48,199.54 C922.26,197.98 924.96,196.94 929.90,197.07 C934.89,197.19 937.46,198.58 942.32,200.17 C947.40,201.82 952.33,200.80 954.74,205.16 C962.27,218.82 959.51,233.31 967.16,245.20 C969.44,248.30 974.60,244.05 979.58,243.76 C984.53,243.48 987.03,243.76 992.00,243.76 L992.00,248.3 L619.40,248.3 Z" fill="rgba(78,93,157,0.1)" stroke="none"/>
<path d="M619.40,241.29 C624.37,241.13 630.24,245.02 631.82,240.89 C640.18,218.99 636.18,194.32 644.24,176.22 C646.11,172.01 652.04,185.77 656.66,185.12 C661.97,184.37 663.34,176.33 669.08,172.71 C673.28,170.06 677.92,167.15 681.50,169.44 C687.86,173.51 690.96,180.09 693.92,188.62 C700.90,208.74 698.39,222.62 706.34,241.06 C708.32,245.67 717.30,248.30 718.76,246.23 C727.23,221.81 722.99,198.38 731.18,169.44 C732.92,163.27 739.67,156.71 743.60,158.47 C749.61,161.16 749.36,174.27 756.02,180.58 C759.30,183.69 764.45,179.56 768.44,182.02 C774.38,185.67 778.15,189.11 780.86,195.86 C788.08,213.81 785.34,228.79 793.28,243.76 C795.28,247.53 804.12,246.91 805.70,242.73 C814.05,220.65 810.73,191.70 818.12,178.11 C820.67,173.43 825.16,196.13 830.54,197.07 C835.10,197.86 837.41,183.75 842.96,182.42 C847.34,181.37 850.20,187.99 855.38,191.09 C860.13,193.94 865.56,192.58 867.80,197.30 C875.50,213.49 872.34,228.37 880.22,243.36 C882.28,247.28 890.34,248.11 892.64,244.57 C900.27,232.83 897.59,218.71 905.06,205.16 C907.53,200.69 912.33,201.22 917.48,199.54 C922.26,197.98 924.96,196.94 929.90,197.07 C934.89,197.19 937.46,198.58 942.32,200.17 C947.40,201.82 952.33,200.80 954.74,205.16 C962.27,218.82 959.51,233.31 967.16,245.20 C969.44,248.30 974.60,244.05 979.58,243.76 C984.53,243.48 987.03,243.76 992.00,243.76" fill="none" stroke="#7f87bf" stroke-width="0.95"/>
<circle cx="619.40" cy="241.29" r="1.6" fill="#7f85bb"/>
<circle cx="631.82" cy="240.89" r="1.6" fill="#7f85bb"/>
<circle cx="644.24" cy="176.22" r="1.6" fill="#7f85bb"/>
<circle cx="656.66" cy="185.12" r="1.6" fill="#7f85bb"/>
<circle cx="669.08" cy="172.71" r="1.6" fill="#7f85bb"/>
<circle cx="681.50" cy="169.44" r="1.6" fill="#7f85bb"/>
<circle cx="693.92" cy="188.62" r="1.6" fill="#7f85bb"/>
<circle cx="706.34" cy="241.06" r="1.6" fill="#7f85bb"/>
<circle cx="718.76" cy="246.23" r="1.6" fill="#7f85bb"/>
<circle cx="731.18" cy="169.44" r="1.6" fill="#7f85bb"/>
<circle cx="743.60" cy="158.47" r="1.6" fill="#7f85bb"/>
<circle cx="756.02" cy="180.58" r="1.6" fill="#7f85bb"/>
<circle cx="768.44" cy="182.02" r="1.6" fill="#7f85bb"/>
<circle cx="780.86" cy="195.86" r="1.6" fill="#7f85bb"/>
<circle cx="793.28" cy="243.76" r="1.6" fill="#7f85bb"/>
<circle cx="805.70" cy="242.73" r="1.6" fill="#7f85bb"/>
<circle cx="818.12" cy="178.11" r="1.6" fill="#7f85bb"/>
<circle cx="830.54" cy="197.07" r="1.6" fill="#7f85bb"/>
<circle cx="842.96" cy="182.42" r="1.6" fill="#7f85bb"/>
<circle cx="855.38" cy="191.09" r="1.6" fill="#7f85bb"/>
<circle cx="867.80" cy="197.30" r="1.6" fill="#7f85bb"/>
<circle cx="880.22" cy="243.36" r="1.6" fill="#7f85bb"/>
<circle cx="892.64" cy="244.57" r="1.6" fill="#7f85bb"/>
<circle cx="905.06" cy="205.16" r="1.6" fill="#7f85bb"/>
<circle cx="917.48" cy="199.54" r="1.6" fill="#7f85bb"/>
<circle cx="929.90" cy="197.07" r="1.6" fill="#7f85bb"/>
<circle cx="942.32" cy="200.17" r="1.6" fill="#7f85bb"/>
<circle cx="954.74" cy="205.16" r="1.6" fill="#7f85bb"/>
<circle cx="967.16" cy="245.20" r="1.6" fill="#7f85bb"/>
<circle cx="979.58" cy="243.76" r="1.6" fill="#7f85bb"/>
<circle cx="992.00" cy="243.76" r="1.6" fill="#7f85bb"/>
<rect x="759.3" y="143.4" width="7" height="7" fill="#eceef5" stroke="#9aa0cc" stroke-width="0.9"/>
<text x="770.0999999999999" y="149.5" class="lg">Total des visites</text>
<path d="M254.4,430.5 L254.40,371.90 A58.6,58.6 0 0 1 308.73,452.45 Z" fill="#7175b1" stroke="#fff" stroke-width="1.2" stroke-linejoin="round"/>
<path d="M254.4,430.5 L308.73,452.45 A58.6,58.6 0 1 1 254.40,371.90 Z" fill="#4cc5ae" stroke="#fff" stroke-width="1.2" stroke-linejoin="round"/><rect x="207.8" y="344.4" width="7.3" height="7.2" fill="#7175b1"/><text x="218.60000000000002" y="350.9" class="lg">Identifié; 947x, 31.11%</text><rect x="203.5" y="358.6" width="7.3" height="7.2" fill="#4cc5ae"/><text x="214.3" y="365.1" class="lg">Anonyme; 2097x, 68.89%</text><path d="M470.3,430.5 L470.30,371.90 A58.6,58.6 0 1 1 438.62,479.80 Z" fill="#7175b1" stroke="#fff" stroke-width="1.2" stroke-linejoin="round"/>
<path d="M470.3,430.5 L438.62,479.80 A58.6,58.6 0 0 1 467.28,371.98 Z" fill="#4cc5ae" stroke="#fff" stroke-width="1.2" stroke-linejoin="round"/>
<path d="M470.3,430.5 L467.28,371.98 A58.6,58.6 0 0 1 470.30,371.90 Z" fill="#fca78e" stroke="#fff" stroke-width="1.2" stroke-linejoin="round"/><rect x="418.6" y="344.4" width="7.3" height="7.2" fill="#7175b1"/><text x="429.40000000000003" y="350.9" class="lg">Non ouvert; 939x, 59.09%</text><rect x="385.9" y="358.6" width="7.3" height="7.2" fill="#4cc5ae"/><text x="396.7" y="365.1" class="lg">Ouvert; 637x, 40.09%</text><rect x="473.6" y="358.6" width="7.3" height="7.2" fill="#fca78e"/><text x="484.40000000000003" y="365.1" class="lg">Échec; 13x, 0.82%</text><circle cx="685.7" cy="423.6" r="64.7" fill="#7175b1"/><line x1="685.7" y1="358.9" x2="685.7" y2="423.6" stroke="#fff" stroke-width="1.1" stroke-linecap="round"/><circle cx="685.7" cy="423.6" r="0.95" fill="#fff"/><rect x="604.5" y="344.8" width="7.3" height="7.2" fill="#7175b1"/><text x="615.3" y="351.3" class="lg">Unique; 22272x, 100%</text><rect x="697.4" y="344.8" width="7.3" height="7.2" fill="#4cc5ae"/><text x="708.1999999999999" y="351.3" class="lg">Connus; 1x, 0%</text><path d="M901.0,430.5 L901.00,371.90 A58.6,58.6 0 1 1 854.29,465.89 Z" fill="#7175b1" stroke="#fff" stroke-width="1.2" stroke-linejoin="round"/>
<path d="M901.0,430.5 L854.29,465.89 A58.6,58.6 0 0 1 851.90,398.51 Z" fill="#4cc5ae" stroke="#fff" stroke-width="1.2" stroke-linejoin="round"/>
<path d="M901.0,430.5 L851.90,398.51 A58.6,58.6 0 0 1 869.60,381.02 Z" fill="#fca78e" stroke="#fff" stroke-width="1.2" stroke-linejoin="round"/>
<path d="M901.0,430.5 L869.60,381.02 A58.6,58.6 0 0 1 901.00,371.90 Z" fill="#f8c660" stroke="#fff" stroke-width="1.2" stroke-linejoin="round"/><rect x="811.3" y="344.4" width="7.3" height="7.2" fill="#7175b1"/><text x="822.0999999999999" y="350.9" class="lg">&lt; 1m; 4296x, 64.68%</text><rect x="900.0" y="344.4" width="7.3" height="7.2" fill="#4cc5ae"/><text x="910.8" y="350.9" class="lg">1 - 5m; 1296x, 19.51%</text><rect x="820.2" y="358.6" width="7.3" height="7.2" fill="#fca78e"/><text x="831.0" y="365.1" class="lg">5 - 10m; 452x, 6.81%</text><rect x="908.2" y="358.6" width="7.3" height="7.2" fill="#f8c660"/><text x="919.0" y="365.1" class="lg">&gt; 10m; 598x, 9%</text>
</svg>

<!-- footer -->
<div class="txt" style="left:149.5px;top:546.3px;font-size:8.27px;color:#767b86;line-height:10px">Copyright 2018 Mautic / <span style="color:#4e5298">Webmecanik</span>. Tous droits réservés.</div>
<div class="txt" style="left:961.4px;top:545.5px;font-size:6.95px;color:#666;line-height:10px">v 2.13.17-atmt</div>
</body></html>
